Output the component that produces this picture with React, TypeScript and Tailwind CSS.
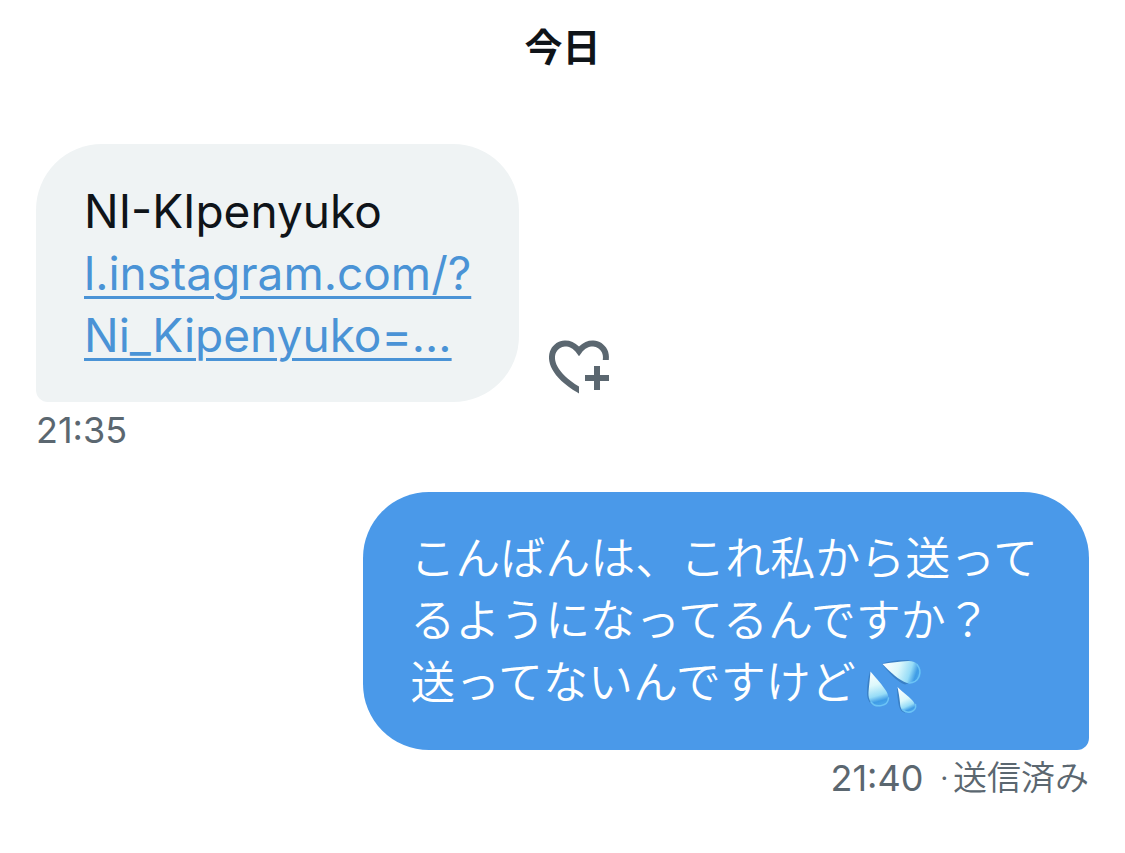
function HeartPlusIcon() {
  return (
    <svg viewBox="0 0 24 24" className="size-[72px]" fill="currentColor" aria-hidden="true">
      <path d="M17 12v3h-2.998v2h3v3h2v-3h3v-2h-3.001v-3H17zm-5 6.839c-3.871-2.34-6.053-4.639-7.127-6.609-1.112-2.04-1.031-3.7-.479-4.82.561-1.13 1.667-1.84 2.91-1.91 1.222-.06 2.68.51 3.892 2.16l.806 1.09.805-1.09c1.211-1.65 2.668-2.22 3.89-2.16 1.242.07 2.347.78 2.908 1.91.334.677.49 1.554.321 2.59h2.011c.153-1.283-.039-2.469-.539-3.48-.887-1.79-2.647-2.91-4.601-3.01-1.65-.09-3.367.56-4.796 2.01-1.43-1.45-3.147-2.1-4.798-2.01-1.954.1-3.714 1.22-4.601 3.01-.896 1.81-.846 4.17.514 6.67 1.353 2.48 4.003 5.12 8.382 7.67l.502.299v-2.32z" />
    </svg>
  );
}

function DropsIcon() {
  return (
    <svg viewBox="1 -3 60 60" className="size-[60px]" role="img" aria-label="汗">
      <defs>
        <linearGradient id="drop-a" gradientUnits="userSpaceOnUse" x1="8" y1="10" x2="18" y2="45">
          <stop offset="0" stopColor="#ffffff" />
          <stop offset="0.4" stopColor="#dcf8fb" />
          <stop offset="0.7" stopColor="#96dcf7" />
          <stop offset="0.86" stopColor="#3f9ce6" />
          <stop offset="1" stopColor="#4ea9ee" />
        </linearGradient>
        <linearGradient id="drop-b" gradientUnits="userSpaceOnUse" x1="20" y1="3" x2="58" y2="16">
          <stop offset="0" stopColor="#ffffff" />
          <stop offset="0.4" stopColor="#dcf8fb" />
          <stop offset="0.7" stopColor="#96dcf7" />
          <stop offset="0.86" stopColor="#3f9ce6" />
          <stop offset="1" stopColor="#4ea9ee" />
        </linearGradient>
        <linearGradient id="drop-c" gradientUnits="userSpaceOnUse" x1="35" y1="26" x2="47" y2="52">
          <stop offset="0" stopColor="#ffffff" />
          <stop offset="0.5" stopColor="#dcf8fb" />
          <stop offset="0.74" stopColor="#96dcf7" />
          <stop offset="0.88" stopColor="#3f9ce6" />
          <stop offset="1" stopColor="#4ea9ee" />
        </linearGradient>
      </defs>
      <g fill="#3a80c6">
        <path d="M7 10C5 17 4 25 4 32C4 40 8 44 13 45L10 30Z" />
        <path d="M19 3C26 0 36 -1.500 45 -1L50 1L28 5Z" />
        <path d="M19 3C25 11 34 21 42 23.500L46 22L32 10Z" />
        <path d="M34 26C34 33 35 41 36 45C37 49 39 51 42 52L38 36Z" />
      </g>
      <path
        d="M7.500 10.500C11 15 18 22 22.500 29C29 39 24 45.500 16.500 45.500C8.500 45.500 5 39 5.500 31.500C6 24 7 17 7.500 10.500Z"
        fill="url(#drop-a)"
      />
      <path
        d="M19.500 3C27 1.500 37 0.500 45 0C53 -0.500 58 5 58 11C58 19 51 24 44 22C36 19.500 27 11 19.500 3Z"
        fill="url(#drop-b)"
      />
      <path
        d="M34.500 26C38.500 30.500 45 34.500 49 39C55.500 46 51 52 45.500 52C39.500 52 37 47 37 42C36.500 36.500 35.500 31 34.500 26Z"
        fill="url(#drop-c)"
      />
      <g fill="none" stroke="#6cc3f6" strokeWidth="1.500" strokeLinecap="round">
        <path d="M8 41C12 47 25 46 25.500 37" />
        <path d="M46 22C56 22 60 11 54 3.500" />
        <path d="M39.500 48.500C44 53.500 54 51 52.500 43.500" />
      </g>
    </svg>
  );
}

export default function App() {
  return (
    <main
      lang="ja"
      className="min-h-screen bg-white px-9 pt-4 font-[Inter,'Noto_Sans_CJK_JP',sans-serif] text-[#0f1419]"
    >
      <h1 className="text-center text-[38px] leading-[62px] font-bold">今日</h1>

      <section className="mt-[66px] flex flex-col items-start">
        <div className="flex items-end gap-6">
          <div className="rounded-[66px] rounded-bl-[12px] bg-[#eff3f4] px-12 py-9 text-[46px] leading-[62px]">
            <p>NI-KIpenyuko</p>
            <a
              href="#instagram"
              className="text-[#4a93d6] underline decoration-[3px] underline-offset-[6px]"
            >
              l.instagram.com/?
              <br />
              Ni_Kipenyuko=...
            </a>
          </div>
          <button type="button" aria-label="リアクションを追加" className="text-[#5b6770]">
            <HeartPlusIcon />
          </button>
        </div>
        <time className="text-[36px] leading-[56px] text-[#5b6770]">21:35</time>
      </section>

      <section className="mt-[34px] flex flex-col items-end">
        <div className="rounded-[66px] rounded-br-[12px] bg-[#4a99e9] py-9 pr-[51px] pl-[47px] text-[45px] leading-[62px] font-[350] text-white">
          <p>こんばんは、これ私から送って</p>
          <p>るようになってるんですか？</p>
          <p className="flex items-end">
            送ってないんですけど
            <span className="-mb-1 pl-2">
              <DropsIcon />
            </span>
          </p>
        </div>
        <p className="flex items-center gap-4 leading-[56px] text-[#5b6770]">
          <time className="text-[36px]">21:40</time>
          <span className="flex items-center gap-1 text-[34px] font-[350]">
            <span>·</span>
            <span>送信済み</span>
          </span>
        </p>
      </section>
    </main>
  );
}
